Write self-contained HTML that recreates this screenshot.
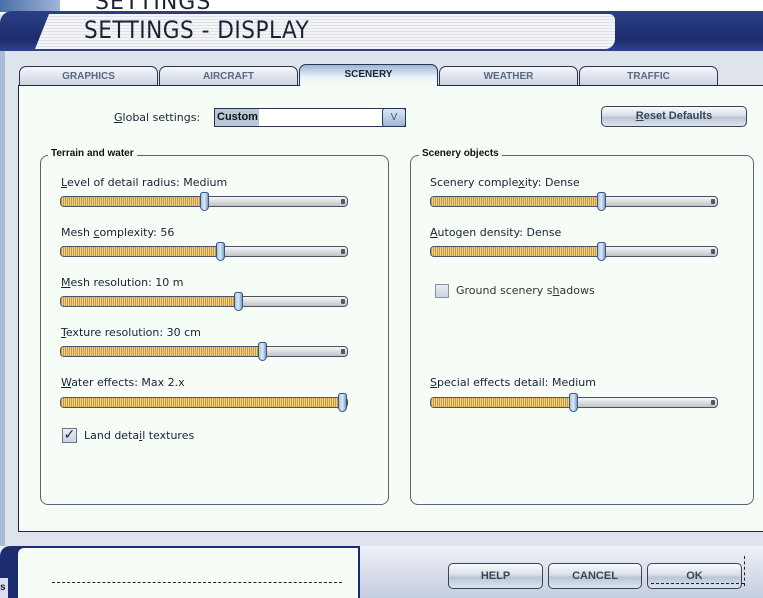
<!DOCTYPE html>
<html><head><meta charset="utf-8"><style>
*{margin:0;padding:0;box-sizing:border-box}
body{width:763px;height:598px;overflow:hidden;position:relative;background:#dfe3ea;font-family:"DejaVu Sans","Liberation Sans",sans-serif;font-size:11px;color:#1a2236}
.a{position:absolute}
.tab{position:absolute;top:66px;height:20px;border:1px solid #2a3550;border-bottom:none;border-radius:7px 7px 0 0;background:linear-gradient(#f4f7fb,#c9d2e0);font:bold 10px "Liberation Sans",sans-serif;color:#5a6880;text-align:center;line-height:20px}
.lbl{position:absolute;font-size:11px;color:#1a2236}
.trk{position:absolute;height:11px;border:1px solid #4a5266;border-radius:4px;background:linear-gradient(#f6f6f6,#d5d7da 60%,#c2c4c8);overflow:hidden}
.fill{position:absolute;left:0;top:0;bottom:0;background:repeating-linear-gradient(90deg,#c99a3c 0 1px,#f0cf86 1px 2px)}
.end{position:absolute;right:2px;top:2px;width:4px;height:5px;background:#4d5868;border-radius:1px}
.th{position:absolute;width:9px;height:19px;border:1px solid #3b5478;border-radius:3px 3px 5px 5px;background:linear-gradient(90deg,#a9c6e6,#dbe9f7,#7b9cc5)}
.grp{position:absolute;border:1px solid #5a6478;border-radius:8px}
.gt{position:absolute;background:#f6fdf6;font:bold 10px "Liberation Sans",sans-serif;padding:0 3px;color:#111}
.btn{position:absolute;height:26px;border:1px solid #3a4256;border-radius:5px;background:linear-gradient(#fafcfe,#d8dfe9 45%,#b9c6d8 55%,#dde4ee);font:bold 11px "Liberation Sans",sans-serif;color:#3a4658;text-align:center;line-height:24px}
</style></head><body>
<div class="a" style="left:0;top:0;width:763px;height:14px;background:#fff"></div>
<div class="a" style="left:0;top:0;width:60px;height:12px;background:linear-gradient(90deg,#4a6fa8,#9fb6d8)"></div>
<div class="a" style="left:95px;top:-10px;font:22px 'DejaVu Sans',sans-serif;color:#1a2236;letter-spacing:1px">SETTINGS</div>
<div class="a" style="left:0;top:11px;width:763px;height:40px;background:linear-gradient(#2c3f86,#1b2c6e 70%,#31448c);border-radius:12px 0 0 0"></div>
<div class="a" style="left:35px;top:14px;width:580px;height:35px;background:repeating-linear-gradient(#f3f4f6 0 2px,#dfe2e8 2px 3px);clip-path:polygon(14px 0,100% 0,100% 100%,0 100%);border-radius:10px 6px 10px 0"></div>
<div class="a" style="left:84px;top:16px;font:24px 'DejaVu Sans Condensed','DejaVu Sans',sans-serif;color:#1a2236;letter-spacing:0.5px">SETTINGS - DISPLAY</div>
<div class="a" style="left:0;top:51px;width:763px;height:495px;background:#dfe4ec"></div>
<div class="a" style="left:0;top:51px;width:5px;height:495px;background:#a9bcd8"></div>
<div class="tab" style="left:19px;width:139px">GRAPHICS</div>
<div class="tab" style="left:159px;width:139px">AIRCRAFT</div>
<div class="tab" style="left:299px;width:139px;top:64px;height:22px;background:linear-gradient(#9fb7d4,#eef3f9 60%,#f6fdf6);color:#1a2236">SCENERY</div>
<div class="tab" style="left:439px;width:139px">WEATHER</div>
<div class="tab" style="left:579px;width:139px">TRAFFIC</div>
<div class="a" style="left:18px;top:85px;width:750px;height:447px;background:#f6fdf6;border:1px solid #1e2638"></div>
<div class="a" style="left:300px;top:85px;width:137px;height:2px;background:#f6fdf6"></div>
<div class="lbl" style="left:114px;top:111px"><u>G</u>lobal settings:</div>
<div class="a" style="left:214px;top:108px;width:192px;height:19px;border:1px solid #2a3550;background:#fff"></div>
<div class="a" style="left:215px;top:109px;width:44px;height:17px;background:#b9c7d9;font:bold 11px 'Liberation Sans',sans-serif;line-height:17px;padding-left:2px;color:#111">Custom</div>
<div class="a" style="left:382px;top:108px;width:24px;height:19px;border:1px solid #2a3550;border-radius:3px;background:linear-gradient(#dbe7f4,#9db6d6);color:#3a5580;text-align:center;font:10px 'Liberation Sans',sans-serif;line-height:17px">V</div>
<div class="btn" style="left:601px;top:106px;width:146px;height:21px;line-height:19px"><u>R</u>eset Defaults</div>
<div class="grp" style="left:40px;top:155px;width:349px;height:350px"></div>
<div class="gt" style="left:48px;top:148px">Terrain and water</div>
<div class="grp" style="left:410px;top:155px;width:344px;height:350px"></div>
<div class="gt" style="left:419px;top:148px">Scenery objects</div>
<div class="lbl" style="left:61px;top:176px"><u>L</u>evel of detail radius: Medium</div>
<div class="trk" style="left:60px;top:196px;width:288px"><div class="fill" style="width:144px"></div><div class="end"></div></div>
<div class="th" style="left:200px;top:192px"></div>
<div class="lbl" style="left:61px;top:226px">Mesh <u>c</u>omplexity: 56</div>
<div class="trk" style="left:60px;top:246px;width:288px"><div class="fill" style="width:160px"></div><div class="end"></div></div>
<div class="th" style="left:216px;top:242px"></div>
<div class="lbl" style="left:61px;top:276px"><u>M</u>esh resolution: 10 m</div>
<div class="trk" style="left:60px;top:296px;width:288px"><div class="fill" style="width:178px"></div><div class="end"></div></div>
<div class="th" style="left:234px;top:292px"></div>
<div class="lbl" style="left:61px;top:326px"><u>T</u>exture resolution: 30 cm</div>
<div class="trk" style="left:60px;top:346px;width:288px"><div class="fill" style="width:202px"></div><div class="end"></div></div>
<div class="th" style="left:258px;top:342px"></div>
<div class="lbl" style="left:61px;top:376px"><u>W</u>ater effects: Max 2.x</div>
<div class="trk" style="left:60px;top:397px;width:288px"><div class="fill" style="width:282px"></div></div>
<div class="th" style="left:338px;top:393px"></div>
<div class="a" style="left:62px;top:428px;width:15px;height:15px;border:1px solid #6a7488;background:linear-gradient(#e8edf4,#c9d2df);font:bold 14px 'DejaVu Sans',sans-serif;line-height:13px;text-align:center;color:#1a2236">✓</div>
<div class="lbl" style="left:84px;top:429px">Land deta<u>i</u>l textures</div>
<div class="lbl" style="left:430px;top:176px">Scenery comple<u>x</u>ity: Dense</div>
<div class="trk" style="left:430px;top:196px;width:288px"><div class="fill" style="width:170px"></div><div class="end"></div></div>
<div class="th" style="left:597px;top:192px"></div>
<div class="lbl" style="left:430px;top:226px"><u>A</u>utogen density: Dense</div>
<div class="trk" style="left:430px;top:246px;width:288px"><div class="fill" style="width:170px"></div><div class="end"></div></div>
<div class="th" style="left:597px;top:242px"></div>
<div class="a" style="left:435px;top:284px;width:14px;height:14px;border:1px solid #8a94a8;background:linear-gradient(#e8edf4,#c9d2df)"></div>
<div class="lbl" style="left:456px;top:284px;color:#333">Ground scenery s<u>h</u>adows</div>
<div class="lbl" style="left:430px;top:376px"><u>S</u>pecial effects detail: Medium</div>
<div class="trk" style="left:430px;top:397px;width:288px"><div class="fill" style="width:142px"></div><div class="end"></div></div>
<div class="th" style="left:569px;top:393px"></div>
<div class="a" style="left:0;top:546px;width:763px;height:52px;background:linear-gradient(#eef1f6,#c5cde0)"></div>
<div class="a" style="left:0;top:546px;width:360px;height:52px;background:#1c2c70;border-radius:10px 0 0 0"></div>
<div class="a" style="left:18px;top:548px;width:340px;height:50px;background:#f6fdf6;border-radius:6px 0 0 0"></div>
<div class="a" style="left:52px;top:582px;width:290px;border-top:1px dashed #222"></div>
<div class="a" style="left:0;top:578px;width:8px;height:20px;background:#dde;font:bold 10px sans-serif;line-height:20px">s</div>
<div class="btn" style="left:448px;top:563px;width:95px">HELP</div>
<div class="btn" style="left:548px;top:563px;width:94px">CANCEL</div>
<div class="btn" style="left:647px;top:563px;width:95px">OK</div>
<div class="a" style="left:651px;top:583px;width:93px;border-top:1px dashed #222"></div>
<div class="a" style="left:744px;top:556px;height:30px;border-left:1px dashed #222"></div>
</body></html>
